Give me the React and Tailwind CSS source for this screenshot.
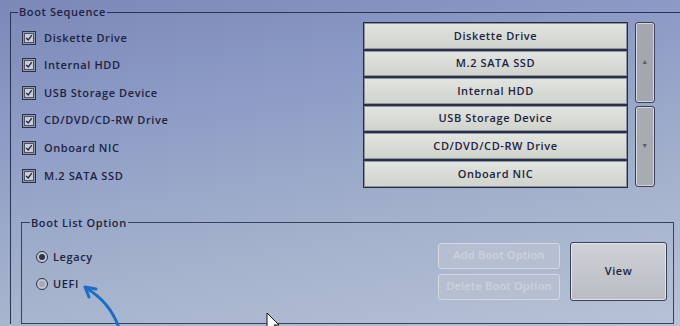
import React from 'react';

const checks = ['Diskette Drive', 'Internal HDD', 'USB Storage Device', 'CD/DVD/CD-RW Drive', 'Onboard NIC', 'M.2 SATA SSD'];
const order = ['Diskette Drive', 'M.2 SATA SSD', 'Internal HDD', 'USB Storage Device', 'CD/DVD/CD-RW Drive', 'Onboard NIC'];

const CheckBox = () => (
    <div className="w-[14px] h-[14px] border border-[#2a2f45] bg-[#8f98ad] p-[1px] shrink-0">
        <div className="w-full h-full border border-[#4a5068] bg-[#c9cdd6] flex items-center justify-center">
            <svg width="10" height="10" viewBox="0 0 10 10">
                <path d="M1.5 5 L4 7.5 L8.5 1.5" fill="none" stroke="#1f2540" strokeWidth="1.6" />
            </svg>
        </div>
    </div>
);

const Radio = ({ on }) => (
    <div className="w-[12px] h-[12px] rounded-full border border-[#2a2f45] bg-[#c4c8d2] flex items-center justify-center shrink-0">
        <div className={on ? 'w-[6px] h-[6px] rounded-full bg-[#2c3350]' : 'w-[6px] h-[6px] rounded-full bg-[#a4a8b4]'}></div>
    </div>
);

const App = () => {
    return (
        <div className="relative w-[680px] h-[326px] overflow-hidden pl-[10px] pt-[6px] text-[#1d2340] font-['Open_Sans',sans-serif] font-semibold tracking-[0.6px] bg-[linear-gradient(170deg,#7b88b8_0%,#8d9bc6_30%,#a3b1cc_65%,#b7c2d6_100%)]">
            <fieldset className="border-l border-t border-[#2c3352] w-[690px] min-w-0 pb-0">
                <legend className="ml-[7px] px-[1px] text-[11px] leading-[12px]">Boot Sequence</legend>

                <div className="flex pt-[4px]">
                    {/* checkbox list */}
                    <div className="w-[352px] pl-[11px] pt-[2px] flex flex-col">
                        {checks.map((c) => (
                            <div key={c} className="h-[27.6px] flex items-center gap-[8px]">
                                <CheckBox />
                                <span className="text-[11px]">{c}</span>
                            </div>
                        ))}
                    </div>

                    {/* boot order */}
                    <div className="w-[265px] border border-[#262b42] bg-[#2b3049] flex flex-col gap-[2px] self-start">
                        {order.map((o) => (
                            <div key={o} className="h-[25.6px] flex items-center justify-center bg-[linear-gradient(180deg,#e2e4df,#d0d4cd)] border border-[#8e93a0] text-[11px]">
                                {o}
                            </div>
                        ))}
                    </div>

                    {/* scrollbar */}
                    <div className="ml-[7px] w-[20px] flex flex-col gap-[3px] self-start">
                        <div className="h-[81px] rounded-[3px] border border-[#3b4058] bg-[#a5a7b0] shadow-[inset_0_0_0_1px_#d5d7de] flex items-center justify-center">
                            <span className="text-[7px] text-[#5a5e70]">▲</span>
                        </div>
                        <div className="h-[81px] rounded-[3px] border border-[#3b4058] bg-[#a9abb3] shadow-[inset_0_0_0_1px_#d5d7de] flex items-center justify-center">
                            <span className="text-[7px] text-[#5a5e70]">▼</span>
                        </div>
                    </div>
                </div>

                {/* boot list option */}
                <fieldset className="ml-[10px] mt-[27px] w-[653px] h-[107px] border border-[#3a4060] min-w-0">
                    <legend className="ml-[8px] px-[1px] text-[11px] leading-[12px]">Boot List Option</legend>
                    <div className="flex items-start">
                        <div className="pl-[14px] pt-[15px] flex flex-col">
                            <div className="h-[27px] flex items-center gap-[5px]">
                                <Radio on />
                                <span className="text-[11px]">Legacy</span>
                            </div>
                            <div className="h-[27px] flex items-center gap-[5px]">
                                <Radio />
                                <span className="text-[11px]">UEFI</span>
                            </div>
                        </div>
                        <div className="ml-auto mr-[6px] mt-[13px] flex gap-[10px]">
                            <div className="flex flex-col gap-[5px] pt-[1px]">
                                <div className="w-[122px] h-[26px] rounded-[3px] border border-[#d3d8e3] bg-[#b6bfd2] flex items-center justify-center text-[11px] text-[#cdd2dd] tracking-[0.2px]">Add Boot Option</div>
                                <div className="w-[122px] h-[26px] rounded-[3px] border border-[#d3d8e3] bg-[#b6bfd2] flex items-center justify-center text-[11px] text-[#cdd2dd] tracking-[0.2px]">Delete Boot Option</div>
                            </div>
                            <div className="w-[97px] h-[59px] rounded-[3px] border border-[#3b4058] bg-[linear-gradient(180deg,#cfd1d6,#b9bcc3)] shadow-[inset_0_0_0_1px_#e4e6ea] flex items-center justify-center text-[11px]">View</div>
                        </div>
                    </div>
                </fieldset>
            </fieldset>

            {/* annotation arrow */}
            <svg className="absolute left-0 top-0 pointer-events-none" width="680" height="326" viewBox="0 0 680 326">
                <path d="M119 328 Q 110 302 86 288" fill="none" stroke="#1a6fc4" strokeWidth="3" strokeLinecap="round" />
                <path d="M96 289 L85 287 L89 297" fill="none" stroke="#1a6fc4" strokeWidth="3" strokeLinecap="round" strokeLinejoin="round" />
                <path d="M267 313 L267 330 L271 326 L274 333 L277 332 L274 325 L279 325 Z" fill="#ffffff" stroke="#111111" strokeWidth="1" strokeLinejoin="round" />
            </svg>
        </div>
    );
};

export default App;
